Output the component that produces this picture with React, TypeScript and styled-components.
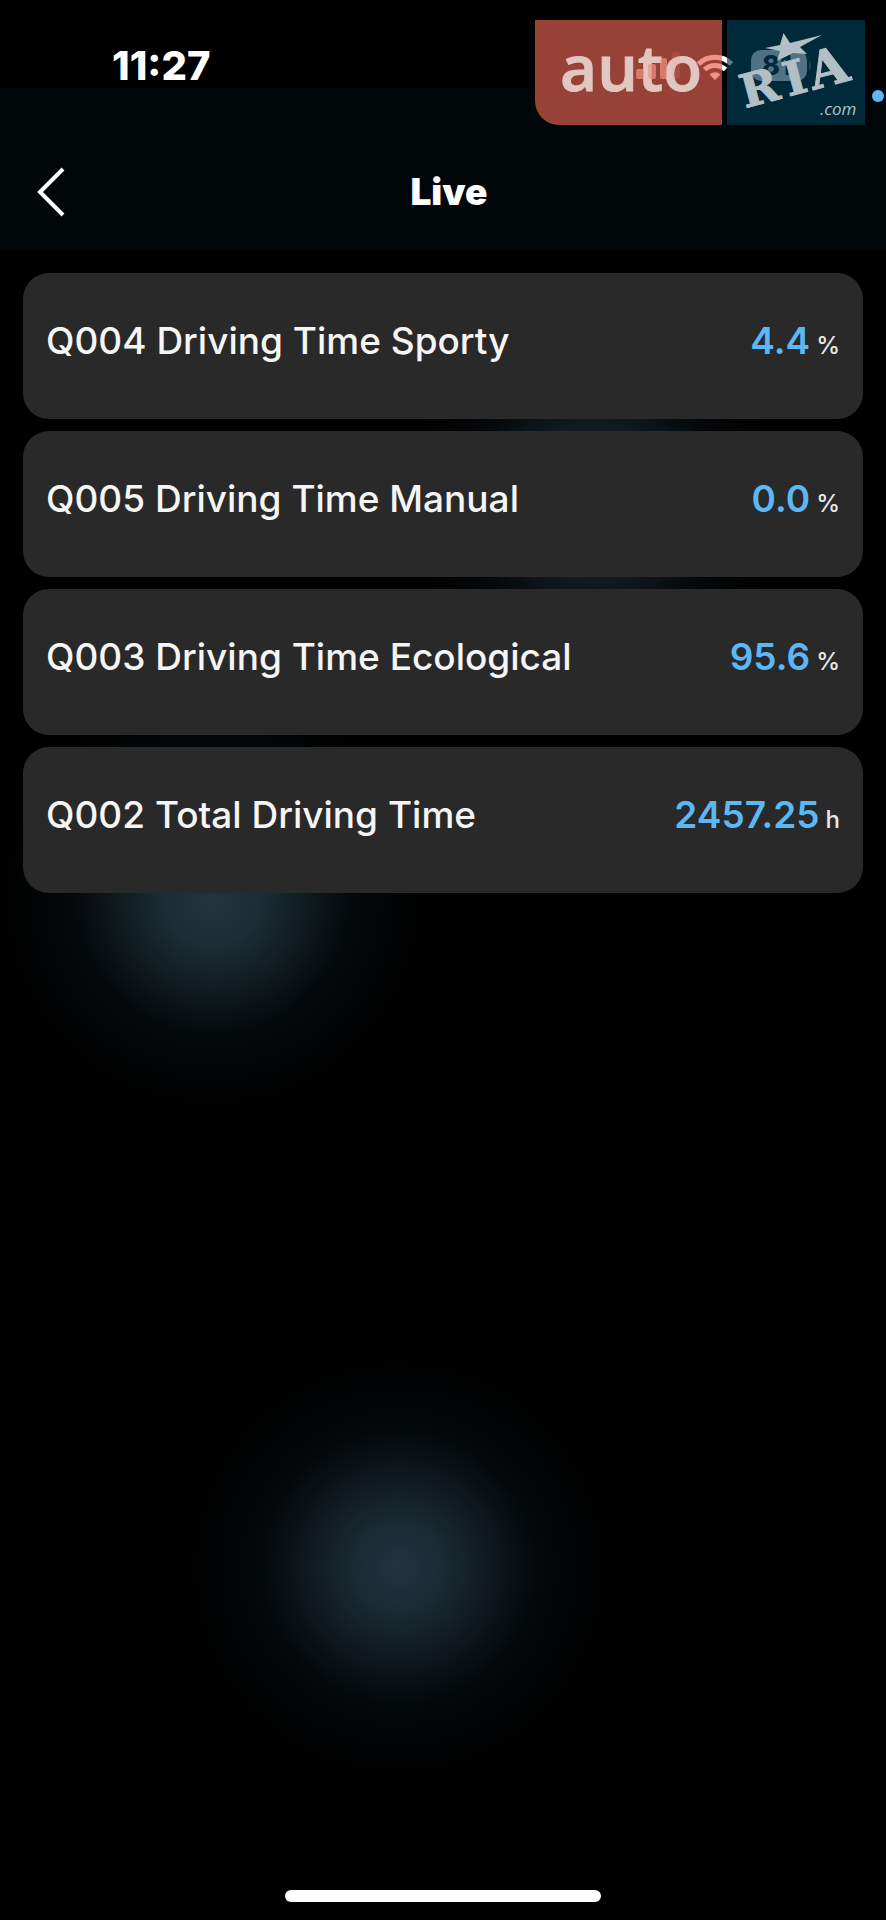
import styled, { createGlobalStyle } from "styled-components";

const GlobalStyle = createGlobalStyle`
*{
    box-sizing: border-box;
}
body{
    margin: 0;
    background-color: #000000;
    font-family: Inter, "Liberation Sans", sans-serif;
}
`;

const Screen = styled.div`
min-height: 100vh;
display: flex;
flex-direction: column;
background-color: #000000;
background-image:
    radial-gradient(circle 190px at 67% 503px, #1b3039 0%, #16262e 25%, #0f1b20 42%, #05090b 66%, transparent 100%),
    radial-gradient(circle 210px at 24% 898px, #21353c 0%, #1b2e36 22%, #101c1f 44%, #05090c 65%, transparent 100%),
    radial-gradient(circle 210px at 45% 1567px, #203440 0%, #192a33 22%, #0f191d 44%, #04080b 65%, transparent 100%);
`;

const StatusBar = styled.div`
position: relative;
height: 88px;
padding: 43px 0 0 112px;
`;

const Clock = styled.time`
display: block;
font-size: 40px;
line-height: 46px;
font-weight: 800;
color: #ffffff;
`;

const SystemIcons = styled.svg`
position: absolute;
top: 0;
right: 0;
width: 366px;
height: 140px;
`;

const Header = styled.header`
display: grid;
grid-template-columns: 104px 1fr 92px;
align-items: center;
height: 162px;
padding-top: 46px;
background-color: #010608;
`;

const BackButton = styled.button`
display: flex;
align-items: center;
width: 104px;
height: 80px;
padding: 0 0 0 36px;
border: none;
background: none;
`;

const Title = styled.h1`
margin: 0;
font-size: 37px;
line-height: 46px;
font-weight: 900;
text-align: center;
color: #ffffff;
`;

const ReadingList = styled.ul`
flex: 1;
display: flex;
flex-direction: column;
gap: 12px;
margin: 0;
padding: 23px 23px 0;
list-style: none;
`;

const Reading = styled.li`
display: flex;
justify-content: space-between;
align-items: baseline;
height: 146px;
padding: 45px 23px 0;
border-radius: 26px;
background-color: #292929;
`;

const Name = styled.span`
font-size: 37px;
line-height: 46px;
font-weight: 500;
color: #f5f5f5;
`;

const Value = styled.span`
display: flex;
align-items: baseline;
gap: 6px;
font-size: 37px;
line-height: 46px;
font-weight: 600;
color: #5bb8f5;
`;

const Unit = styled.small`
font-size: 24px;
font-weight: 500;
color: #e8e8e8;
`;

const HomeBar = styled.div`
align-self: center;
width: 316px;
height: 12px;
margin-bottom: 18px;
border-radius: 6px;
background-color: #ffffff;
`;

interface IReading {
    code: string,
    name: string,
    value: string,
    unit: string,
}

const readings: IReading[] = [
    { code: "Q004", name: "Driving Time Sporty", value: "4.4", unit: "%" },
    { code: "Q005", name: "Driving Time Manual", value: "0.0", unit: "%" },
    { code: "Q003", name: "Driving Time Ecological", value: "95.6", unit: "%" },
    { code: "Q002", name: "Total Driving Time", value: "2457.25", unit: "h" },
];

function StatusIcons() {
    return (
        <SystemIcons viewBox="0 0 366 140">
            <defs>
                {/* the wifi sign crosses both badges and the gap between them */}
                <linearGradient id="wifi" gradientUnits="userSpaceOnUse" x1="177" y1="0" x2="213" y2="0">
                    <stop offset="0.694" stopColor="#f19388" />
                    <stop offset="0.694" stopColor="#ffffff" />
                    <stop offset="0.833" stopColor="#ffffff" />
                    <stop offset="0.833" stopColor="#557b8d" />
                </linearGradient>
            </defs>
            <path d="M15 20H202V125H39A24 24 0 0 1 15 101Z" fill="#984136" />
            <rect x="207" y="20" width="138" height="105" fill="#002939" />
            <g fill="none" stroke="url(#wifi)" strokeWidth="5">
                <path d="M178.500 64A23.500 23.500 0 0 1 211.500 64" />
                <path d="M184.500 69.500A15.500 15.500 0 0 1 205.500 69.500" />
            </g>
            <path d="M189.500 74.500A8 8 0 0 1 200.500 74.500L195 80Z" fill="#f19388" />
            <rect x="231" y="50" width="56" height="31" rx="10" fill="#4f7385" />
            <path d="M289 61Q293 65.500 289 70Z" fill="#27495a" />
            <text x="242" y="75" fontFamily="Inter" fontSize="27" fontWeight="800" fill="#002939">81</text>
            <text x="40" y="91" fontFamily="Open Sans" fontSize="64" fontWeight="600" fill="#e1c6c2" stroke="#e1c6c2">auto</text>
            <g fill="#f19388">
                <rect x="116" y="69" width="8" height="10" rx="2" opacity="0.7" />
                <rect x="128" y="64" width="8" height="15" rx="2" opacity="0.7" />
                <rect x="140" y="58" width="7" height="21" rx="2" opacity="0.7" />
                <rect x="152" y="52" width="8" height="27" rx="2" opacity="0.15" />
            </g>
            <path d="M263.500 33L270 43L302 35L280 47L287 54L273 53L257 61L260 51L245 48L260 45Z" fill="#b2c0c6" />
            <g transform="rotate(-15 226 108)" fontFamily="DejaVu Serif" fontWeight="700" fill="#b2c0c6" stroke="#b2c0c6">
                <text x="225" y="108" fontSize="46">R</text>
                <text x="270" y="108" fontSize="47">I</text>
                <text x="296" y="108" fontSize="51">A</text>
            </g>
            <text x="300" y="115" fontFamily="Open Sans" fontSize="17" fontStyle="italic" fill="#b2c0c6">.com</text>
            <circle cx="358" cy="96" r="6" fill="#5bb8f5" />
        </SystemIcons>
    )
}

function App() {
    return (
        <>
            <GlobalStyle />
            <Screen>
                <StatusBar>
                    <Clock>11:27</Clock>
                    <StatusIcons />
                </StatusBar>
                <Header>
                    <BackButton aria-label="Back">
                        <svg width="32" height="52" viewBox="0 0 32 52" fill="none" stroke="#ffffff" strokeWidth="4">
                            <path d="M27 3L4 26L27 49" />
                        </svg>
                    </BackButton>
                    <Title>Live</Title>
                </Header>
                <ReadingList>
                    {readings.map((reading) => (
                        <Reading key={reading.code}>
                            <Name>{reading.code} {reading.name}</Name>
                            <Value>{reading.value}<Unit>{reading.unit}</Unit></Value>
                        </Reading>))}
                </ReadingList>
                <HomeBar />
            </Screen>
        </>
    )
}
export default App;
